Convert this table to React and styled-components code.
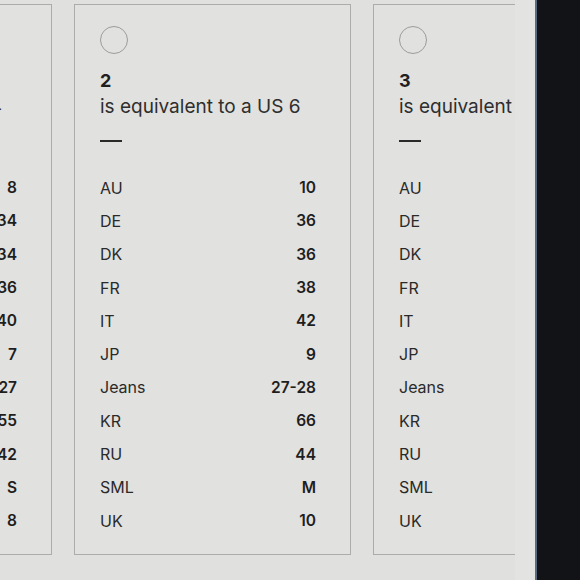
import React from "react";
import styled, { createGlobalStyle } from "styled-components";

const GlobalStyle = createGlobalStyle`
  html, body {
    margin: 0;
    padding: 0;
    background: #dededc;
  }
  body {
    font-family: Inter, "Noto Sans", "Liberation Sans", sans-serif;
    color: #262626;
  }
`;

const Screen = styled.div`
  display: flex;
  width: 580px;
  height: 580px;
  overflow: hidden;
`;

const Display = styled.div`
  display: flex;
  width: 535px;
  flex-shrink: 0;
  background: #e0e0de;
`;

const Scroller = styled.div`
  width: 515px;
  flex-shrink: 0;
  overflow: hidden;
`;

const Gutter = styled.div`
  flex: 1;
  background: #e3e3e1;
`;

const Bezel = styled.div`
  flex: 1;
  background: #121317;
  border-left: 2px solid #5c6a80;
`;

const Track = styled.div`
  display: flex;
  gap: 22px;
  margin-left: -225px;
  padding-top: 4px;
`;

const Card = styled.div`
  box-sizing: border-box;
  width: 277px;
  height: 551px;
  flex-shrink: 0;
  border: 1px solid #acacaa;
  background: #e1e1df;
  padding: 21px 34px 0 25px;
  display: flex;
  flex-direction: column;
`;

const Radio = styled.div`
  box-sizing: border-box;
  width: 28px;
  height: 28px;
  border-radius: 50%;
  border: 1.5px solid #9c9c9a;
`;

const Size = styled.div`
  margin-top: 16px;
  font-size: 18px;
  font-weight: 700;
  line-height: 22px;
  color: #1f1f1f;
`;

const Equivalent = styled.div`
  margin-top: 1px;
  font-size: 19px;
  line-height: 28px;
  white-space: nowrap;
  color: #2e2e2e;
`;

const Dash = styled.div`
  width: 22px;
  height: 2px;
  background: #2a2a2a;
  margin-top: 19px;
  margin-bottom: 29px;
`;

const Row = styled.div`
  display: flex;
  justify-content: space-between;
  align-items: center;
  height: 33.3px;
  font-size: 16px;
  white-space: nowrap;
`;

const Label = styled.span`
  color: #2a2a2a;
`;

const Value = styled.span`
  font-weight: 600;
  font-size: 15.5px;
  color: #1e1e1e;
`;

const labels = ["AU", "DE", "DK", "FR", "IT", "JP", "Jeans", "KR", "RU", "SML", "UK"];

const sizes = [
  { n: "1", us: "4", values: ["8", "34", "34", "36", "40", "7", "27", "55", "42", "S", "8"] },
  { n: "2", us: "6", values: ["10", "36", "36", "38", "42", "9", "27-28", "66", "44", "M", "10"] },
  { n: "3", us: "8", values: ["12", "38", "38", "40", "44", "11", "29", "77", "46", "M", "12"] },
];

const SizeCard = ({ size }) => (
  <Card>
    <Radio />
    <Size>{size.n}</Size>
    <Equivalent>is equivalent to a US {size.us}</Equivalent>
    <Dash />
    {labels.map((label, i) => (
      <Row key={label}>
        <Label>{label}</Label>
        <Value>{size.values[i]}</Value>
      </Row>
    ))}
  </Card>
);

export default function App() {
  return (
    <>
      <GlobalStyle />
      <Screen>
        <Display>
          <Scroller>
            <Track>
              {sizes.map((s) => (
                <SizeCard key={s.n} size={s} />
              ))}
            </Track>
          </Scroller>
          <Gutter />
        </Display>
        <Bezel />
      </Screen>
    </>
  );
}
